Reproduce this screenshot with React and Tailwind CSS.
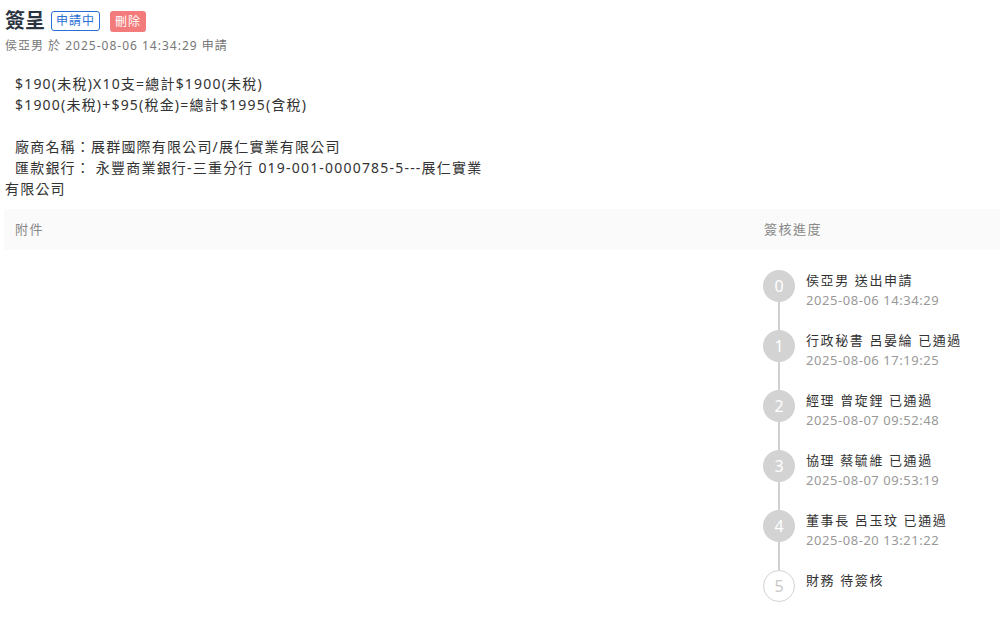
import React from "react";

const steps = [
  { name: "侯亞男 送出申請", time: "2025-08-06 14:34:29", done: true },
  { name: "行政秘書 呂晏綸 已通過", time: "2025-08-06 17:19:25", done: true },
  { name: "經理 曾琁鋰 已通過", time: "2025-08-07 09:52:48", done: true },
  { name: "協理 蔡毓維 已通過", time: "2025-08-07 09:53:19", done: true },
  { name: "董事長 呂玉玟 已通過", time: "2025-08-20 13:21:22", done: true },
  { name: "財務 待簽核", time: "", done: false },
];

function Step({ index, step, last }) {
  return (
    <div className="flex h-[60px]">
      <div className="relative flex w-[32px] flex-col items-center">
        {!last && <div className="absolute top-[16px] h-[60px] w-[2px] bg-[#d0d0d0]" />}
        <div
          className={
            step.done
              ? "relative z-10 flex h-[32px] w-[32px] items-center justify-center rounded-full bg-[#d3d3d3] text-[16px] text-white"
              : "relative z-10 flex h-[32px] w-[32px] items-center justify-center rounded-full border border-[#d3d3d3] bg-white text-[16px] text-[#c8c8c8]"
          }
        >
          {index}
        </div>
      </div>
      <div className="ml-[11px] flex flex-col">
        <div className="text-[13px] leading-[20px] tracking-[1.6px] text-[#333]">{step.name}</div>
        {step.time && (
          <div className="text-[13px] leading-[20px] tracking-[0.55px] text-[#999]">{step.time}</div>
        )}
      </div>
    </div>
  );
}

export default function App() {
  return (
    <div className="h-[624px] w-[1000px] bg-white font-['Noto_Sans','Noto_Sans_CJK_TC',sans-serif] text-[#333]">
      <div className="flex items-center pl-[5px] pt-[8px]">
        <h1 className="text-[20px] font-bold leading-[26px] text-[#2a3441]">簽呈</h1>
        <span className="ml-[6px] rounded-[3px] border border-[#2a6fd6] px-[4px] text-[12px] leading-[18px] tracking-[1px] text-[#2a6fd6]">
          申請中
        </span>
        <span className="ml-[10px] rounded-[3px] bg-[#f47b7b] px-[5px] text-[12px] leading-[21px] tracking-[1px] text-white">
          刪除
        </span>
      </div>
      <div className="pl-[5px] pt-[3px] text-[12px] leading-[18px] tracking-[1px] text-[#777]">
        侯亞男 於 2025-08-06 14:34:29 申請
      </div>
      <div className="pt-[18px] text-[14px] leading-[21px] tracking-[1.2px] text-[#333]">
        <div className="pl-[15px]">$190(未稅)X10支=總計$1900(未稅)</div>
        <div className="pl-[15px]">$1900(未稅)+$95(稅金)=總計$1995(含稅)</div>
        <div className="h-[21px]" />
        <div className="pl-[15px]">廠商名稱：展群國際有限公司/展仁實業有限公司</div>
        <div className="pl-[15px]">匯款銀行： 永豐商業銀行-三重分行 019-001-0000785-5---展仁實業</div>
        <div className="pl-[5px]">有限公司</div>
      </div>
      <div className="ml-[4px] mt-[10px] flex h-[41px] items-center bg-[#fafafa] text-[13px] tracking-[1.5px] text-[#888]">
        <div className="flex-1 pl-[11px]">附件</div>
        <div className="w-[236px]">簽核進度</div>
      </div>
      <div className="flex pt-[20px]">
        <div className="flex-1" />
        <div className="w-[237px]">
          {steps.map((s, i) => (
            <Step key={i} index={i} step={s} last={i === steps.length - 1} />
          ))}
        </div>
      </div>
    </div>
  );
}
